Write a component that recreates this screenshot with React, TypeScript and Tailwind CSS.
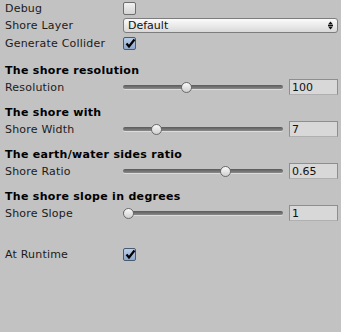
import React from "react";

const font = { fontFamily: '"DejaVu Sans", Verdana, sans-serif' };

function Checkbox({ checked }: { checked?: boolean }) {
  return (
    <div
      className={
        "relative w-[13px] h-[13px] rounded-[2px] border " +
        (checked
          ? "border-[#4a5a70] bg-gradient-to-b from-[#b9cde6] to-[#8fa9cc]"
          : "border-[#6e6e6e] bg-gradient-to-b from-[#f2f2f2] to-[#d4d4d4]")
      }
    >
      {checked && (
        <svg className="absolute left-[1px] top-[0px]" width="11" height="11" viewBox="0 0 11 11">
          <path d="M1.5 5.5 L4 8.5 L9.5 1.5" stroke="#000" strokeWidth="2.2" fill="none" strokeLinejoin="miter" />
        </svg>
      )}
    </div>
  );
}

function Row({ label, children, h = "h-[17px]" }: { label: string; children?: React.ReactNode; h?: string }) {
  return (
    <div className={"flex items-center " + h}>
      <div className="w-[123px] shrink-0 pl-[5px] text-[11px] text-[#1b1b1b] whitespace-nowrap leading-none tracking-[0.2px]">{label}</div>
      <div className="flex-1 flex items-center pr-[3px]">{children}</div>
    </div>
  );
}

function Heading({ text, mt }: { text: string; mt: string }) {
  return (
    <div className={"h-[16px] flex items-center pl-[5px] text-[11px] font-bold text-black leading-none tracking-[0.3px] " + mt}>
      {text}
    </div>
  );
}

function Slider({ frac, value }: { frac: number; value: string }) {
  const center = 5 + frac * 150;
  return (
    <div className="flex items-center w-full">
      <div className="relative w-[160px] h-[12px] flex items-center shrink-0">
        <div className="w-full h-[4px] rounded-[2px] bg-gradient-to-b from-[#5a5a5a] to-[#8a8a8a] shadow-[0_1px_0_#dcdcdc]" />
        <div
          className="absolute top-[1px] w-[11px] h-[11px] rounded-full border border-[#6a6a6a] bg-gradient-to-b from-[#fafafa] to-[#cfcfcf]"
          style={{ left: center - 5.5 }}
        />
      </div>
      <div className="ml-[6px] flex-1 h-[16px] border border-[#8e8e8e] border-b-[#b0b0b0] bg-[#d8d8d8] flex items-center pl-[2px] text-[11px] text-[#111] leading-none">
        {value}
      </div>
    </div>
  );
}

export default function App() {
  return (
    <div className="w-[341px] h-[332px] bg-[#c2c2c2] overflow-hidden" style={font}>
      <Row label="Debug">
        <Checkbox />
      </Row>
      <Row label="Shore Layer">
        <div className="w-full h-[15px] rounded-[3px] border border-[#7d7d7d] bg-gradient-to-b from-[#fbfbfb] to-[#d9d9d9] flex items-center justify-between pl-[4px] pr-[4px] text-[11px] text-[#111] leading-none">
          <span>Default</span>
          <svg width="5" height="9" viewBox="0 0 5 9">
            <path d="M0 3.5 L2.5 0.5 L5 3.5 Z" fill="#111" />
            <path d="M0 5.5 L2.5 8.5 L5 5.5 Z" fill="#111" />
            <rect x="0" y="4" width="5" height="1" fill="#111" />
          </svg>
        </div>
      </Row>
      <Row label="Generate Collider" h="h-[18px]">
        <Checkbox checked />
      </Row>

      <Heading text="The shore resolution" mt="mt-[10px]" />
      <Row label="Resolution" h="h-[18px]">
        <Slider frac={0.39} value="100" />
      </Row>

      <Heading text="The shore with" mt="mt-[8px]" />
      <Row label="Shore Width" h="h-[18px]">
        <Slider frac={0.19} value="7" />
      </Row>

      <Heading text="The earth/water sides ratio" mt="mt-[8px]" />
      <Row label="Shore Ratio" h="h-[18px]">
        <Slider frac={0.65} value="0.65" />
      </Row>

      <Heading text="The shore slope in degrees" mt="mt-[8px]" />
      <Row label="Shore Slope" h="h-[18px]">
        <Slider frac={0} value="1" />
      </Row>

      <div className="mt-[23px]">
        <Row label="At Runtime" h="h-[18px]">
          <Checkbox checked />
        </Row>
      </div>
    </div>
  );
}
